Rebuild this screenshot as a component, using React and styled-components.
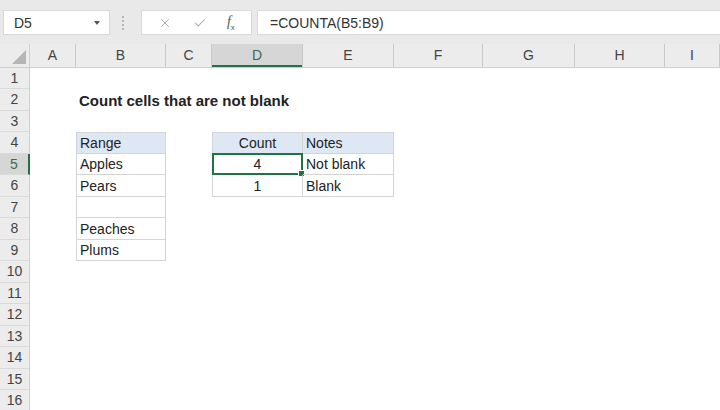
import React from 'react';
import styled, { createGlobalStyle, css } from 'styled-components';
import { X, Check } from 'lucide-react';

const GlobalStyle = createGlobalStyle`
  html, body {
    margin: 0;
    padding: 0;
    background: #ffffff;
    font-family: "Liberation Sans", Arial, sans-serif;
    overflow: hidden;
  }
`;

const GREEN = '#217346';
const TABLE_LINE = '#d4d4d4';

const columns = ['A', 'B', 'C', 'D', 'E', 'F', 'G', 'H', 'I'];
// row header + A..H fixed, I takes the rest
const gridTemplate = '30px 46px 90px 46px 91px 91px 89px 92px 90px 1fr';

const Sheet = styled.div`
  width: 720px;
  height: 410px;
  display: flex;
  flex-direction: column;
  background: #ffffff;
  overflow: hidden;
`;

const TopBar = styled.div`
  height: 44px;
  flex: none;
  background: #e9e9e9;
  display: flex;
  align-items: flex-start;
  padding: 10px 0 0 3px;
  box-sizing: border-box;
`;

const NameBox = styled.div`
  width: 107px;
  height: 25px;
  box-sizing: border-box;
  background: #ffffff;
  border: 1px solid #d9d9d9;
  display: flex;
  align-items: center;
  justify-content: space-between;
  padding: 0 9px 0 10px;
  font-size: 14px;
  color: #333;
`;

const Caret = styled.span`
  width: 0;
  height: 0;
  border-left: 3.5px solid transparent;
  border-right: 3.5px solid transparent;
  border-top: 4px solid #555;
`;

const Grip = styled.div`
  width: 0;
  height: 14px;
  margin: 6px 17px 0 12px;
  border-left: 2px dotted #b8b8b8;
`;

const FxBox = styled.div`
  width: 111px;
  height: 25px;
  box-sizing: border-box;
  background: #ffffff;
  border: 1px solid #d9d9d9;
  display: flex;
  align-items: center;
  justify-content: space-around;
  padding: 0 6px;
  color: #a9a9a9;
`;

const FxLabel = styled.span`
  font-family: "Liberation Serif", "Times New Roman", serif;
  font-style: italic;
  font-size: 14px;
  color: #555;
  sub {
    font-size: 8px;
    font-style: normal;
    font-family: "Liberation Sans", Arial, sans-serif;
  }
`;

const FormulaInput = styled.div`
  flex: 1;
  height: 25px;
  box-sizing: border-box;
  margin-left: 5px;
  background: #ffffff;
  border: 1px solid #d9d9d9;
  border-right: none;
  display: flex;
  align-items: center;
  padding-left: 12px;
  font-size: 14px;
  color: #333;
`;

const HeaderRow = styled.div`
  display: grid;
  grid-template-columns: ${gridTemplate};
  height: 23.5px;
  flex: none;
  background: #ececec;
  border-bottom: 1px solid #cfcfcf;
  box-sizing: border-box;
`;

const Corner = styled.div`
  position: relative;
  border-right: 1px solid #cfcfcf;
  svg {
    position: absolute;
    right: 3px;
    bottom: 3px;
  }
`;

const ColHead = styled.div`
  display: flex;
  align-items: center;
  justify-content: center;
  font-size: 14px;
  color: #444;
  border-right: 1px solid #c9c9c9;
  box-sizing: border-box;
  ${(p) =>
    p.$active &&
    css`
      background: #d6d6d6;
      color: #3d6b52;
      box-shadow: inset 0 -2px 0 ${GREEN};
    `}
`;

const Body = styled.div`
  display: grid;
  grid-template-columns: ${gridTemplate};
  grid-auto-rows: 21.5px;
  flex: none;
`;

const RowHead = styled.div`
  display: flex;
  align-items: center;
  justify-content: center;
  font-size: 14px;
  color: #444;
  background: #ececec;
  border-right: 1px solid #cfcfcf;
  border-bottom: 1px solid #d9d9d9;
  box-sizing: border-box;
  ${(p) =>
    p.$active &&
    css`
      background: #d6d6d6;
      color: #3d6b52;
      border-right: 2px solid ${GREEN};
    `}
`;

const Cell = styled.div`
  position: relative;
  box-sizing: border-box;
  display: flex;
  align-items: center;
  justify-content: ${(p) => (p.$center ? 'center' : 'flex-start')};
  padding: 1px 3px 0;
  font-size: ${(p) => (p.$bold ? '15px' : '14px')};
  font-weight: ${(p) => (p.$bold ? 700 : 400)};
  color: #222;
  white-space: nowrap;
  overflow: visible;
  background: ${(p) => (p.$fill ? '#dde8f4' : 'transparent')};
  ${(p) =>
    p.$boxed &&
    css`
      border-right: 1px solid ${TABLE_LINE};
      border-bottom: 1px solid ${TABLE_LINE};
    `}
  ${(p) => p.$top && css`border-top: 1px solid ${TABLE_LINE};`}
  ${(p) => p.$left && css`border-left: 1px solid ${TABLE_LINE};`}
`;

const Selection = styled.div`
  position: absolute;
  inset: -1px;
  border: 2px solid ${GREEN};
  pointer-events: none;
`;

const FillHandle = styled.span`
  position: absolute;
  right: -4px;
  bottom: -4px;
  width: 5px;
  height: 5px;
  background: ${GREEN};
  border: 1px solid #ffffff;
`;

// sheet contents keyed by "col+row"
const cells = {
  B2: { text: 'Count cells that are not blank', bold: true },
  B4: { text: 'Range', fill: true, boxed: true, top: true, left: true },
  B5: { text: 'Apples', boxed: true, left: true },
  B6: { text: 'Pears', boxed: true, left: true },
  B7: { text: '', boxed: true, left: true },
  B8: { text: 'Peaches', boxed: true, left: true },
  B9: { text: 'Plums', boxed: true, left: true },
  D4: { text: 'Count', fill: true, boxed: true, top: true, left: true, center: true },
  E4: { text: 'Notes', fill: true, boxed: true, top: true },
  D5: { text: '4', boxed: true, left: true, center: true },
  E5: { text: 'Not blank', boxed: true },
  D6: { text: '1', boxed: true, left: true, center: true },
  E6: { text: 'Blank', boxed: true },
};

const activeCol = 'D';
const activeRow = 5;
const rows = Array.from({ length: 16 }, (_, i) => i + 1);

export default function App() {
  return (
    <>
      <GlobalStyle />
      <Sheet>
        <TopBar>
          <NameBox>
            D5
            <Caret />
          </NameBox>
          <Grip />
          <FxBox>
            <X size={14} strokeWidth={1.6} />
            <Check size={14} strokeWidth={1.8} />
            <FxLabel>
              f<sub>x</sub>
            </FxLabel>
          </FxBox>
          <FormulaInput>=COUNTA(B5:B9)</FormulaInput>
        </TopBar>

        <HeaderRow>
          <Corner>
            <svg width="14" height="14" viewBox="0 0 14 14">
              <polygon points="14,0 14,14 0,14" fill="#b5b5b5" />
            </svg>
          </Corner>
          {columns.map((c) => (
            <ColHead key={c} $active={c === activeCol}>
              {c}
            </ColHead>
          ))}
        </HeaderRow>

        <Body>
          {rows.map((r) => (
            <React.Fragment key={r}>
              <RowHead $active={r === activeRow}>{r}</RowHead>
              {columns.map((c) => {
                const d = cells[`${c}${r}`] || {};
                const selected = c === activeCol && r === activeRow;
                return (
                  <Cell
                    key={c}
                    $bold={d.bold}
                    $fill={d.fill}
                    $boxed={d.boxed}
                    $top={d.top}
                    $left={d.left}
                    $center={d.center}
                  >
                    {d.text}
                    {selected && (
                      <Selection>
                        <FillHandle />
                      </Selection>
                    )}
                  </Cell>
                );
              })}
            </React.Fragment>
          ))}
        </Body>
      </Sheet>
    </>
  );
}
